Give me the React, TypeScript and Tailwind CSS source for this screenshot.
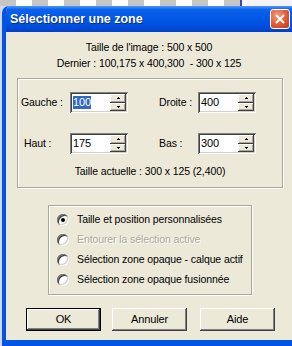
import React from "react";

const font = { fontFamily: '"Liberation Sans", Arial, sans-serif' };

function Spin({ value, selected }: { value: string; selected?: boolean }) {
  return (
    <div className="flex h-[21px] w-[58px] bg-white p-[2px] shadow-[inset_1px_1px_0_#808080,inset_-1px_-1px_0_#fff,inset_2px_2px_0_#404040,inset_-2px_-2px_0_#d4d0c8]">
      <div className="flex flex-1 items-center pl-[1px] text-[11px] leading-[13px]">
        <span className={selected ? "bg-[#316ac5] text-white" : ""}>{value}</span>
      </div>
      <div className="flex w-[16px] flex-col">
        <SpinBtn up />
        <SpinBtn />
      </div>
    </div>
  );
}

function SpinBtn({ up }: { up?: boolean }) {
  return (
    <div className="flex flex-1 items-center justify-center bg-[#ece9d8] shadow-[inset_-1px_-1px_0_#404040,inset_1px_1px_0_#fff,inset_-2px_-2px_0_#aca899]">
      <svg width="3" height="2" viewBox="0 0 3 2">
        {up ? <path d="M1 0h1v1h1v1H0V1h1z" fill="#000" /> : <path d="M0 0h3v1H2v1H1V1H0z" fill="#000" />}
      </svg>
    </div>
  );
}

function Radio({ label, checked, disabled }: { label: string; checked?: boolean; disabled?: boolean }) {
  return (
    <div className="flex h-[20px] items-center whitespace-nowrap">
      <div className="ml-[8px] flex h-[12px] w-[12px] shrink-0 items-center justify-center rounded-full bg-white shadow-[inset_1px_1px_0_#808080,inset_-1px_-1px_0_#fff,inset_2px_2px_0_#404040,inset_-2px_-2px_0_#d4d0c8]">
        {checked && <div className="h-[4px] w-[4px] rounded-full bg-black" />}
      </div>
      <span
        className={
          "ml-[8px] " +
          (disabled ? "text-[#aca899] [text-shadow:1px_1px_0_#fff]" : "text-black")
        }
      >
        {label}
      </span>
    </div>
  );
}

function Btn({ label, def }: { label: string; def?: boolean }) {
  return (
    <div
      className={
        "flex h-[23px] w-[75px] items-center justify-center bg-[#ece9d8] " +
        (def
          ? "border border-black shadow-[inset_-1px_-1px_0_#404040,inset_1px_1px_0_#fff,inset_-2px_-2px_0_#808080]"
          : "shadow-[inset_-1px_-1px_0_#404040,inset_1px_1px_0_#fff,inset_-2px_-2px_0_#808080]")
      }
    >
      {label}
    </div>
  );
}

export default function App() {
  return (
    <div
      className="flex h-[346px] w-[292px] flex-col overflow-hidden bg-[#d4d6ee] text-[10.5px] tracking-[-0.1px] text-black"
      style={font}
    >
      <div className="flex h-[6px] shrink-0">
        <div className="w-[240px] bg-[repeating-linear-gradient(90deg,#c6c6c6_0_16px,#ffffff_16px_32px)]" />
        <div className="w-[2px] bg-[#3b4aa0]" />
        <div className="flex-1 bg-[#f4f4f8]" />
      </div>
      <div className="ml-[2px] flex flex-1 flex-col overflow-hidden rounded-tl-[7px] border-b-[6px] border-l-[4px] border-[#0055e5]">
        <div className="-ml-[4px] flex h-[26px] shrink-0 items-center bg-[linear-gradient(180deg,#4a98ff_0%,#0b61ea_14%,#0058e6_50%,#004bd9_85%,#0040c4_100%)] pl-[8px] pr-[2px]">
          <span className="flex-1 text-[12.5px] font-bold tracking-normal text-white [text-shadow:1px_1px_0_#0a2a8a]">
            Sélectionner une zone
          </span>
          <div className="flex h-[20px] w-[20px] items-center justify-center rounded-[3px] border border-white bg-[radial-gradient(circle_at_35%_30%,#f39b7c_0%,#e05a32_55%,#c0391a_100%)]">
            <svg width="10" height="10" viewBox="0 0 10 10">
              <path d="M1 1L9 9M9 1L1 9" stroke="#fff" strokeWidth="2" />
            </svg>
          </div>
        </div>
        <div className="flex flex-1 flex-col bg-[#ece9d8]">
          <div className="pt-[9px] text-center leading-[13px]">Taille de l'image : 500 x 500</div>
          <div className="mt-[3px] text-center leading-[13px]">Dernier : 100,175 x 400,300&nbsp; - 300 x 125</div>

          <div className="ml-[11px] mt-[8px] h-[110px] w-[266px] border border-[#aca899] shadow-[1px_1px_0_#fff,inset_1px_1px_0_#fff]">
            <div className="mt-[13px] flex h-[21px] items-center">
              <span className="ml-[3px] w-[49px]">Gauche :</span>
              <Spin value="100" selected />
              <span className="ml-[31px] w-[39px]">Droite :</span>
              <Spin value="400" />
            </div>
            <div className="mt-[20px] flex h-[21px] items-center">
              <span className="ml-[6px] w-[46px]">Haut :</span>
              <Spin value="175" />
              <span className="ml-[31px] w-[39px]">Bas :</span>
              <Spin value="300" />
            </div>
            <div className="mt-[11px] text-center leading-[13px]">Taille actuelle : 300 x 125 (2,400)</div>
          </div>

          <div className="ml-[42px] mt-[17px] h-[90px] w-[204px] overflow-hidden border border-[#aca899] pt-[4px] shadow-[1px_1px_0_#fff,inset_1px_1px_0_#fff]">
            <Radio label="Taille et position personnalisées" checked />
            <Radio label="Entourer la sélection active" disabled />
            <Radio label="Sélection zone opaque - calque actif" />
            <Radio label="Sélection zone opaque fusionnée" />
          </div>

          <div className="ml-[20px] mt-[13px] flex gap-[11px] text-[11px]">
            <Btn label="OK" def />
            <Btn label="Annuler" />
            <div className="ml-[2px]">
              <Btn label="Aide" />
            </div>
          </div>
        </div>
      </div>
    </div>
  );
}
